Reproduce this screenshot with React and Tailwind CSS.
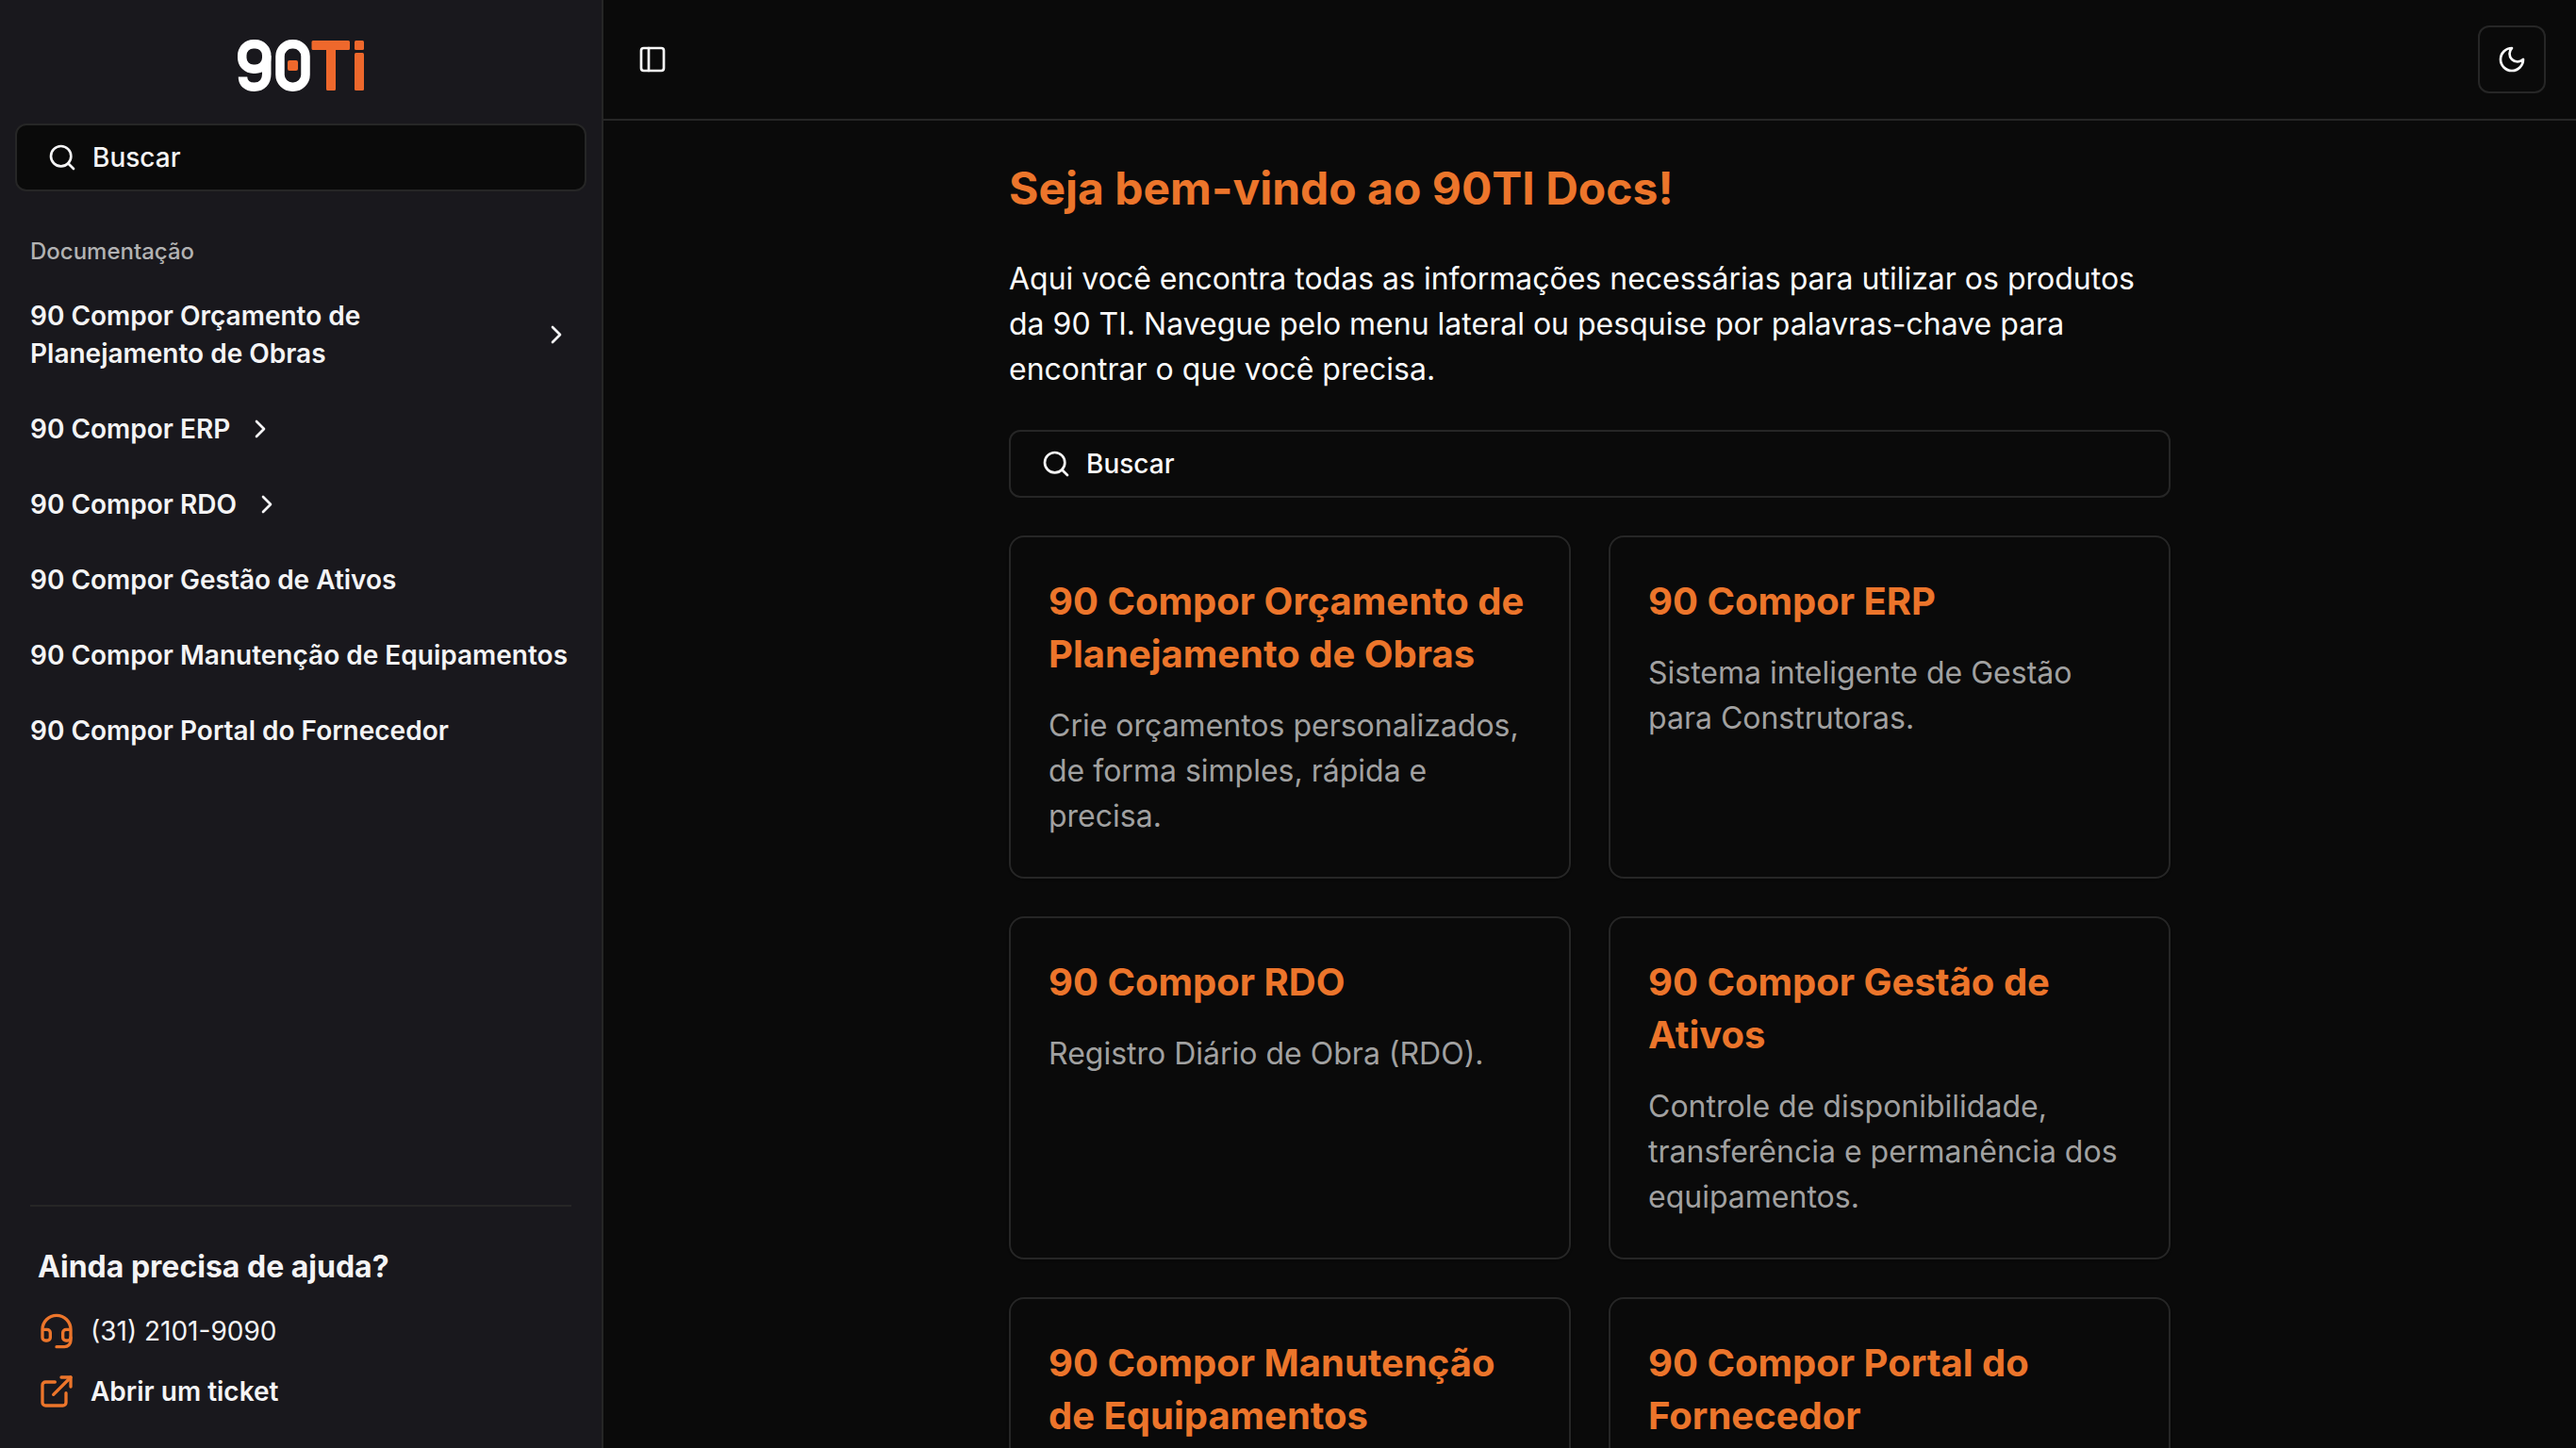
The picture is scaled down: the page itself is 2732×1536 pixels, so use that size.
import { ChevronRight, ExternalLink, Headset, PanelLeft, Search } from "lucide-react";

const navItems = [
  { label: "90 Compor Orçamento de Planejamento de Obras", expandable: true },
  { label: "90 Compor ERP", expandable: true },
  { label: "90 Compor RDO", expandable: true },
  { label: "90 Compor Gestão de Ativos" },
  { label: "90 Compor Manutenção de Equipamentos" },
  { label: "90 Compor Portal do Fornecedor" },
];

const cards = [
  {
    title: "90 Compor Orçamento de Planejamento de Obras",
    text: "Crie orçamentos personalizados, de forma simples, rápida e precisa.",
  },
  { title: "90 Compor ERP", text: "Sistema inteligente de Gestão para Construtoras." },
  { title: "90 Compor RDO", text: "Registro Diário de Obra (RDO)." },
  {
    title: "90 Compor Gestão de Ativos",
    text: "Controle de disponibilidade, transferência e permanência dos equipamentos.",
  },
  { title: "90 Compor Manutenção de Equipamentos" },
  { title: "90 Compor Portal do Fornecedor" },
];

function Logo() {
  return (
    <svg width="134" height="55" viewBox="0 0 134 55" role="img" aria-label="90Ti">
      <g fill="none" stroke="#fff" strokeWidth="9.500">
        <rect x="4.750" y="4.750" width="26" height="26.500" rx="12" />
        <path d="M30.750 17v19.500c0 8.500-5 13.750-13 13.750S5.500 46 5.500 39.500" />
        <rect x="45" y="4.750" width="27" height="45.500" rx="13" />
      </g>
      <g fill="#ee682c">
        <rect x="53" y="22" width="11" height="11" rx="2" />
        <path d="M80 1h37.500a1.500 1.500 0 0 1 1.500 1.500v7a1.500 1.500 0 0 1-1.500 1.500H104v41.500a1.500 1.500 0 0 1-1.500 1.500h-7a1.500 1.500 0 0 1-1.500-1.500V11H80a1.500 1.500 0 0 1-1.500-1.500v-7A1.500 1.500 0 0 1 80 1z" />
        <rect x="124" y="1" width="10" height="10" rx="1.500" />
        <rect x="124" y="14" width="10" height="40" rx="1.500" />
      </g>
    </svg>
  );
}

function MoonIcon() {
  return (
    <svg
      width="32"
      height="32"
      viewBox="0 0 24 24"
      fill="none"
      stroke="currentColor"
      strokeWidth="2"
      strokeLinecap="round"
      strokeLinejoin="round"
      aria-hidden="true"
    >
      <path d="M12 3a6 6 0 0 0 9 9 9 9 0 1 1-9-9Z" />
    </svg>
  );
}

function SearchButton() {
  return (
    <button
      type="button"
      className="flex h-[72px] w-full items-center gap-4 rounded-xl border-2 border-[#262626] bg-[#0a0a0a] px-8 text-[28px] leading-10 font-medium"
    >
      <Search size={32} />
      Buscar
    </button>
  );
}

function Sidebar() {
  return (
    <aside className="flex w-[640px] shrink-0 flex-col border-r-2 border-[#262626] bg-[#19181d] text-[#f4f4f5]">
      <div className="flex flex-col items-center px-4 pt-[42px]">
        <a href="#" className="mb-[34px] block">
          <Logo />
        </a>
        <SearchButton />
      </div>
      <nav className="px-8 pt-8" aria-label="Documentação">
        <h2 className="flex h-16 items-center text-2xl font-medium text-[#b2b2b3]">Documentação</h2>
        <ul className="flex flex-col gap-10 pt-4">
          {navItems.map(({ label, expandable }) => (
            <li key={label} className="flex text-[28px] leading-10 font-semibold">
              {expandable ? (
                <button type="button" className="flex items-center gap-4 text-left">
                  <span>{label}</span>
                  <ChevronRight size={32} className="shrink-0" />
                </button>
              ) : (
                <a href="#" className="whitespace-nowrap">
                  {label}
                </a>
              )}
            </li>
          ))}
        </ul>
      </nav>
      <footer className="mx-8 mt-auto border-t-2 border-[#262626] px-2 pt-10 pb-9">
        <h2 className="text-[32px] leading-12 font-bold">Ainda precisa de ajuda?</h2>
        <p className="mt-5 flex items-center gap-4 text-[28px] leading-12">
          <Headset size={40} className="text-[#ec752b]" />
          (31) 2101-9090
        </p>
        <a href="#" className="mt-4 flex items-center gap-4 text-[28px] leading-12 font-semibold">
          <ExternalLink size={40} className="text-[#ec752b]" />
          Abrir um ticket
        </a>
      </footer>
    </aside>
  );
}

export default function App() {
  return (
    <div className="flex h-screen overflow-hidden bg-[#0a0a0a] font-['Inter',sans-serif] text-[#fafafa] antialiased">
      <Sidebar />
      <div className="flex min-w-0 flex-1 flex-col">
        <header className="flex h-32 shrink-0 items-center justify-between border-b-2 border-[#262626] px-8">
          <button type="button" aria-label="Alternar menu lateral" className="flex size-10 items-center justify-center">
            <PanelLeft size={32} />
          </button>
          <button
            type="button"
            aria-label="Alternar tema"
            className="flex size-[72px] items-center justify-center rounded-xl border-2 border-[#262626]"
          >
            <MoonIcon />
          </button>
        </header>
        <main className="mx-auto flex w-full max-w-[1312px] flex-col gap-10 p-10">
          <h1 className="text-5xl leading-16 font-bold text-[#ec752b]">Seja bem-vindo ao 90TI Docs!</h1>
          <p className="text-[32px] leading-12">
            Aqui você encontra todas as informações necessárias para utilizar os produtos da 90 TI. Navegue pelo menu
            lateral ou pesquise por palavras-chave para encontrar o que você precisa.
          </p>
          <SearchButton />
          <div className="grid grid-cols-2 gap-10">
            {cards.map(({ title, text }) => (
              <a
                key={title}
                href="#"
                className="flex min-h-[364px] flex-col gap-6 rounded-2xl border-2 border-[#262626] p-10 shadow-sm"
              >
                <h2 className="text-[40px] leading-14 font-bold text-[#ec752b]">{title}</h2>
                {text && <p className="text-[32px] leading-12 text-[#a1a1a1]">{text}</p>}
              </a>
            ))}
          </div>
        </main>
      </div>
    </div>
  );
}
